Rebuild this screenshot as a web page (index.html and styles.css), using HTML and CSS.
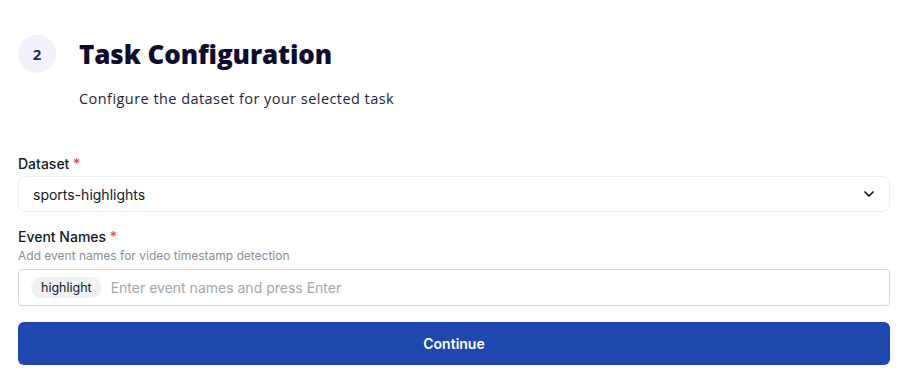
FILE: index.html
```html
<!DOCTYPE html>
<html lang="en">
<head>
    <meta charset="UTF-8">
    <meta name="viewport" content="width=device-width, initial-scale=1.0">
    <title>Task Configuration</title>
    <link rel="stylesheet" href="styles.css">
</head>
<body>

    <div class="step">
        <div class="step-header">
            <div class="step-number">2</div>
            <h2 class="step-title">Task Configuration</h2>
        </div>
        <p class="step-desc">Configure the dataset for your selected task</p>
    </div>

    <form class="config-form">
        <div class="field">
            <label class="field-label">Dataset <span class="required">*</span></label>
            <div class="select-box">
                <span>sports-highlights</span>
                <svg class="chevron" width="16" height="16" viewBox="0 0 24 24" fill="none" stroke="currentColor" stroke-width="2.5" stroke-linecap="round" stroke-linejoin="round"><path d="M6 9l6 6 6-6"/></svg>
            </div>
        </div>

        <div class="field">
            <label class="field-label">Event Names <span class="required">*</span></label>
            <div class="field-help">Add event names for video timestamp detection</div>
            <div class="tag-input">
                <span class="tag">highlight</span>
                <input type="text" placeholder="Enter event names and press Enter">
            </div>
        </div>

        <button type="button" class="continue-btn">Continue</button>
    </form>

</body>
</html>
```

FILE: styles.css
```css
body {
    margin: 0;
    padding: 35px 17px 0 18px;
    background-color: #ffffff;
    font-family: 'Inter', sans-serif;
    color: #111827;
}
.step-header {
    display: flex;
    align-items: center;
    gap: 23px;
}
.step-number {
    width: 38px;
    height: 38px;
    border-radius: 50%;
    background-color: #f1f2fb;
    color: #2e2c4e;
    display: flex;
    align-items: center;
    justify-content: center;
    font-family: 'Open Sans', sans-serif;
    font-weight: 700;
    font-size: 15px;
}
.step-title {
    margin: 0;
    font-family: 'Open Sans', sans-serif;
    font-weight: 800;
    font-size: 26px;
    letter-spacing: -0.1px;
    color: #0f0d2e;
}
.step-desc {
    margin: 16px 0 0 61px;
    font-family: 'Open Sans', sans-serif;
    font-size: 14.5px;
    letter-spacing: 0.45px;
    color: #1f1d3a;
}
.config-form {
    margin-top: 47px;
    display: flex;
    flex-direction: column;
}
.field {
    display: flex;
    flex-direction: column;
    margin-bottom: 16px;
}
.field-label {
    font-size: 14px;
    font-weight: 500;
    color: #111827;
    margin-bottom: 4px;
}
.required {
    color: #ef4444;
}
.field-help {
    font-size: 12px;
    color: #8a8f98;
    margin-top: -1px;
    margin-bottom: 6px;
}
.select-box {
    display: flex;
    align-items: center;
    justify-content: space-between;
    height: 36px;
    box-sizing: border-box;
    padding: 0 12px 0 14px;
    border: 1px solid #eceef4;
    border-radius: 7px;
    font-size: 14px;
    color: #111827;
}
.chevron {
    color: #111;
}
.tag-input {
    display: flex;
    align-items: center;
    gap: 7px;
    height: 37px;
    box-sizing: border-box;
    padding: 0 12px;
    border: 1px solid #d4d6dc;
    border-radius: 4px;
}
.tag {
    background-color: #f0f1f3;
    border-radius: 11px;
    padding: 3px 10px;
    font-size: 12.5px;
    color: #111827;
}
.tag-input input {
    flex: 1;
    border: none;
    outline: none;
    font-family: 'Inter', sans-serif;
    font-size: 14px;
    color: #111827;
}
.tag-input input::placeholder {
    color: #a3a7ae;
}
.continue-btn {
    height: 43px;
    border: none;
    border-radius: 6px;
    background-color: #1e47b0;
    color: white;
    font-family: 'Inter', sans-serif;
    font-weight: 600;
    font-size: 14px;
    cursor: pointer;
}
```
